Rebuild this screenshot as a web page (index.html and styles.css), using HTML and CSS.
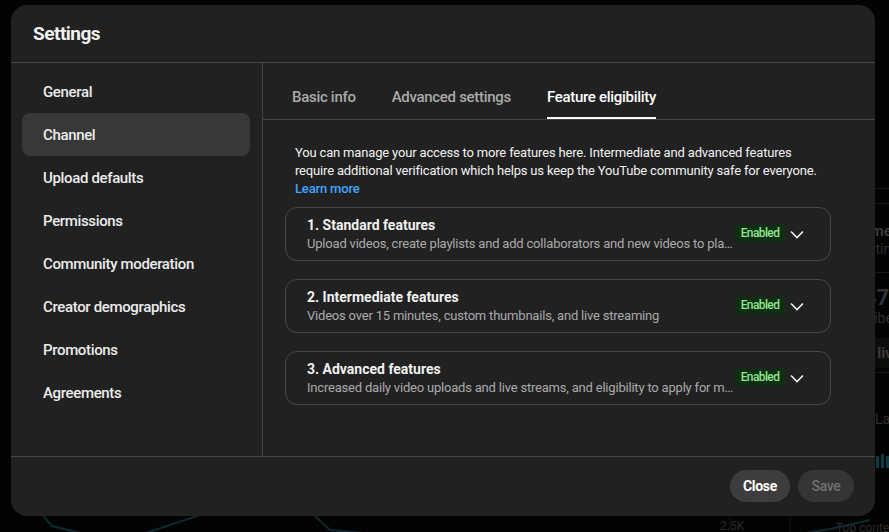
FILE: index.html
```html
<!DOCTYPE html>
<html lang="en">
<head>
<meta charset="utf-8">
<title>Settings</title>
<link rel="stylesheet" href="styles.css">
</head>
<body>
<div class="backdrop">
  <div class="bg-hline bg-l1"></div>
  <div class="bg-hline bg-l2"></div>
  <div class="bg-hline bg-l3"></div>
  <div class="bg-hline bg-l4"></div>
  <div class="bg-band"></div>
  <span class="bg-t bg-strong bg-a">Realtime</span>
  <span class="bg-t bg-dim bg-b">Updating live</span>
  <span class="bg-t bg-big bg-c">47</span>
  <span class="bg-t bg-dim bg-d">Subscribers</span>
  <span class="bg-t bg-strong bg-e">See live count</span>
  <span class="bg-t bg-dim bg-f">Last 48 hours</span>
  <div class="bg-bars"><i></i><i></i><i></i><i></i><i></i></div>
  <svg class="bg-chart" width="889" height="40" viewBox="0 0 889 40">
    <polyline points="30,0 52,26 80,33 140,35 230,5 300,2 330,30 420,38 520,40 600,36 700,38 800,34 830,29 870,20" fill="none" stroke="#0c2a30" stroke-width="2"/>
    <line x1="730" y1="0" x2="730" y2="40" stroke="#151515"/>
    <line x1="790" y1="0" x2="790" y2="40" stroke="#151515"/>
  </svg>
  <span class="bg-label bg-k">2.5K</span>
  <span class="bg-label bg-top">Top content</span>
</div>

<div class="modal">
  <header class="modal-header">
    <h1 class="modal-title">Settings</h1>
  </header>
  <div class="modal-body">
    <nav class="sidebar">
      <div class="nav-item">General</div>
      <div class="nav-item active">Channel</div>
      <div class="nav-item">Upload defaults</div>
      <div class="nav-item">Permissions</div>
      <div class="nav-item">Community moderation</div>
      <div class="nav-item">Creator demographics</div>
      <div class="nav-item">Promotions</div>
      <div class="nav-item">Agreements</div>
    </nav>
    <main class="content">
      <div class="tabs">
        <div class="tab">Basic info</div>
        <div class="tab">Advanced settings</div>
        <div class="tab active">Feature eligibility</div>
      </div>
      <div class="pane">
        <p class="intro">You can manage your access to more features here. Intermediate and advanced features require additional verification which helps us keep the YouTube community safe for everyone.<br><a class="link" href="#">Learn more</a></p>
        <div class="cards">
          <div class="card">
            <div class="card-text">
              <div class="card-title">1. Standard features</div>
              <div class="card-sub">Upload videos, create playlists and add collaborators and new videos to playlists</div>
            </div>
            <span class="badge">Enabled</span>
            <svg class="chev" width="24" height="24" viewBox="0 0 24 24"><path d="M6 9.5l6 6 6-6" fill="none" stroke="#f1f1f1" stroke-width="1.6"/></svg>
          </div>
          <div class="card">
            <div class="card-text">
              <div class="card-title">2. Intermediate features</div>
              <div class="card-sub">Videos over 15 minutes, custom thumbnails, and live streaming</div>
            </div>
            <span class="badge">Enabled</span>
            <svg class="chev" width="24" height="24" viewBox="0 0 24 24"><path d="M6 9.5l6 6 6-6" fill="none" stroke="#f1f1f1" stroke-width="1.6"/></svg>
          </div>
          <div class="card">
            <div class="card-text">
              <div class="card-title">3. Advanced features</div>
              <div class="card-sub">Increased daily video uploads and live streams, and eligibility to apply for monetization</div>
            </div>
            <span class="badge">Enabled</span>
            <svg class="chev" width="24" height="24" viewBox="0 0 24 24"><path d="M6 9.5l6 6 6-6" fill="none" stroke="#f1f1f1" stroke-width="1.6"/></svg>
          </div>
        </div>
      </div>
    </main>
  </div>
  <footer class="modal-footer">
    <button class="btn btn-close">Close</button>
    <button class="btn btn-save" disabled>Save</button>
  </footer>
</div>
</body>
</html>
```

FILE: styles.css
```css
* { box-sizing: border-box; }
html, body {
  margin: 0;
  padding: 0;
  width: 889px;
  height: 532px;
  overflow: hidden;
  background: #030303;
  font-family: Roboto, "Noto Sans", Arial, sans-serif;
  color: #f1f1f1;
}

/* dimmed dashboard behind the dialog */
.backdrop {
  position: absolute;
  inset: 0;
  overflow: hidden;
}
.bg-hline { position: absolute; left: 840px; width: 60px; height: 1px; background: #161616; }
.bg-l1 { top: 188px; }
.bg-l2 { top: 203px; }
.bg-l3 { top: 272px; }
.bg-l4 { top: 372px; }
.bg-band { position: absolute; left: 840px; top: 338px; width: 60px; height: 30px; background: #0c0c0c; }
.bg-t { position: absolute; white-space: nowrap; line-height: 18px; }
.bg-strong { font-size: 15px; font-weight: 700; color: #3a3a3a; }
.bg-dim { font-size: 14px; color: #2e2e2e; }
.bg-big { font-size: 22px; font-weight: 700; color: #333; line-height: 24px; }
.bg-a { left: 832px; top: 222px; }
.bg-b { left: 843px; top: 240px; }
.bg-c { left: 864px; top: 286px; }
.bg-d { left: 831px; top: 309px; }
.bg-e { left: 848px; top: 344px; }
.bg-f { left: 875px; top: 410px; }
.bg-bars {
  position: absolute;
  left: 876px;
  top: 452px;
  display: flex;
  align-items: flex-end;
  gap: 2px;
  height: 16px;
}
.bg-bars i { display: block; width: 3px; height: 12px; background: #0b3a44; }
.bg-bars i:nth-child(2) { height: 14px; }
.bg-bars i:nth-child(4) { height: 10px; }
.bg-chart { position: absolute; left: 0; top: 500px; }
.bg-label { position: absolute; font-size: 12px; color: #2a2a2a; white-space: nowrap; }
.bg-k { left: 720px; top: 519px; }
.bg-top { left: 836px; top: 521px; }

/* dialog */
.modal {
  position: absolute;
  left: 11px;
  top: 5px;
  width: 864px;
  height: 511px;
  background: #212121;
  border-radius: 16px;
  display: flex;
  flex-direction: column;
  overflow: hidden;
}
.modal-header {
  height: 58px;
  flex: none;
  border-bottom: 1px solid #464646;
  display: flex;
  align-items: center;
  padding: 0 22px;
}
.modal-title {
  margin: 0;
  font-size: 19px;
  font-weight: 700;
  color: #f1f1f1;
  letter-spacing: -0.5px;
}
.modal-body {
  flex: 1;
  display: flex;
  min-height: 0;
}
.sidebar {
  width: 252px;
  flex: none;
  border-right: 1px solid #464646;
  padding: 7px 12px 0 11px;
  display: flex;
  flex-direction: column;
}
.nav-item {
  height: 43px;
  display: flex;
  align-items: center;
  padding-left: 21px;
  font-size: 15px;
  font-weight: 500;
  letter-spacing: -0.35px;
  color: #ececec;
  border-radius: 8px;
}
.nav-item.active { background: #383838; }

.content {
  flex: 1;
  min-width: 0;
  display: flex;
  flex-direction: column;
}
.tabs {
  display: flex;
  gap: 36px;
  padding-left: 29px;
  height: 57px;
  flex: none;
  border-bottom: 1px solid #464646;
}
.tab {
  padding-top: 24px;
  height: 56px;
  font-size: 15px;
  font-weight: 500;
  letter-spacing: -0.3px;
  line-height: 20px;
  color: #aaaaaa;
  border-bottom: 2px solid transparent;
}
.tab.active { color: #ffffff; border-bottom-color: #ffffff; }

.pane {
  padding: 24px 44px 0 22px;
}
.intro {
  margin: 0;
  padding: 0 10px;
  font-size: 13px;
  line-height: 18px;
  letter-spacing: -0.17px;
  color: #f1f1f1;
}
.link { color: #3ea6ff; text-decoration: none; font-weight: 500; }
.cards {
  margin-top: 9px;
  display: flex;
  flex-direction: column;
  gap: 18px;
}
.card {
  display: flex;
  align-items: center;
  border: 1px solid #474747;
  border-radius: 12px;
  padding: 7px 21px 7px 21px;
}
.card-text {
  flex: 1;
  min-width: 0;
}
.card-title {
  font-size: 14px;
  font-weight: 700;
  line-height: 20px;
  color: #f1f1f1;
}
.card-sub {
  font-size: 13px;
  line-height: 18px;
  letter-spacing: -0.2px;
  color: #aaaaaa;
  white-space: nowrap;
  overflow: hidden;
  text-overflow: ellipsis;
}
.badge {
  flex: none;
  align-self: flex-start;
  margin-top: 10px;
  width: 50px;
  height: 17px;
  line-height: 17px;
  text-align: center;
  background: #0e2f12;
  color: #8fe68f;
  font-size: 12px;
  font-weight: 500;
  letter-spacing: -0.6px;
  border-radius: 3px;
}
.chev { flex: none; display: block; }

.modal-footer {
  height: 60px;
  flex: none;
  border-top: 1px solid #464646;
  display: flex;
  justify-content: flex-end;
  align-items: center;
  gap: 8px;
  padding: 0 21px 1px 0;
}
.btn {
  height: 32px;
  border: none;
  border-radius: 16px;
  padding: 0;
  font-family: Roboto, "Noto Sans", Arial, sans-serif;
  font-size: 14px;
  font-weight: 700;
  letter-spacing: -0.3px;
}
.btn-close { width: 60px; background: #3d3d3d; color: #ffffff; }
.btn-save { width: 56px; background: #353535; color: #717171; font-weight: 500; }
```
